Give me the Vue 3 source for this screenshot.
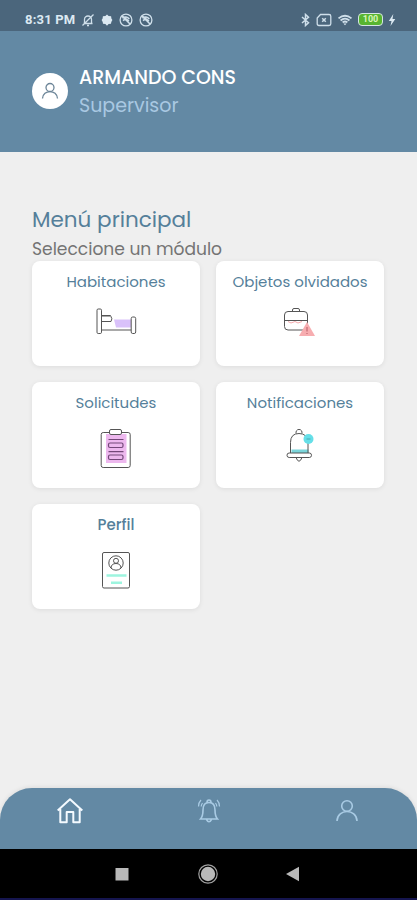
<template>
  <div class="screen">

    <!-- android status bar -->
    <div class="status-bar">
      <span class="clock">8:31 PM</span>
      <div class="status-left">
        <svg width="14" height="14" viewBox="0 0 14 14" class="line">
          <path d="M2.500 10.500h9M3.500 10V6.500a3.500 3.500 0 0 1 7 0V10M6 12.500h2M1.500 12.500l11-11" />
        </svg>
        <svg width="12" height="14" viewBox="0 0 12 14" class="solid">
          <path d="M6 1.500l1.600 1.600 2.500.2.300 2.300 1 1.500-1.100 1.900-.3 1.800-2.400.3L6 12.700l-1.600-1.600L2 10.800 1.700 9 .6 7.100l1-1.500.3-2.300 2.500-.2z" />
        </svg>
        <svg v-for="n in 2" :key="n" width="14" height="14" viewBox="0 0 14 14" class="line">
          <circle cx="7" cy="7" r="5.900" />
          <path d="M3.500 5.200c2-1.800 5-1.500 6.800.8M4 7.600c1.500-1.400 3.500-1.200 5 .4M3 3l8 8M6 5l4 3" stroke-width="1.500" />
        </svg>
      </div>
      <div class="status-right">
        <svg width="11" height="14" viewBox="0 0 11 14" class="line">
          <path d="M2 4l6.500 5.700L5.500 12.500v-11L8.500 4.300 2 10" stroke-width="1.500" />
        </svg>
        <svg width="16" height="14" viewBox="0 0 16 14" class="line">
          <path d="M4.500 1.500H13q1.800 0 1.800 1.800v7.400q0 1.800-1.800 1.800H3q-1.800 0-1.800-1.800V5z" />
          <path d="M6.200 5.200l3.600 3.600M9.800 5.200L6.200 8.800" stroke-width="1.500" />
        </svg>
        <svg width="16" height="14" viewBox="0 0 18 14" class="line">
          <path d="M1.700 5.200q7.300-6 14.600 0M4 7.500q5-4 10 0M6.300 9.700q2.700-2 5.400 0" stroke-width="2" />
          <path d="M7.200 10.800h3.600L9 13z" fill="#dce9f2" stroke="none" />
        </svg>
        <div class="battery">100</div>
        <svg width="8" height="14" viewBox="0 0 8 14" class="solid">
          <path d="M5.300 1L.8 8h2.700l-1 5L7.300 6H4.500z" />
        </svg>
      </div>
    </div>

    <!-- user header -->
    <header class="header">
      <div class="avatar">
        <svg width="18" height="18" viewBox="0 0 18 18">
          <circle cx="9" cy="5.500" r="4" />
          <path d="M1.500 16.500c.4-9.300 14.600-9.300 15 0" />
        </svg>
      </div>
      <div>
        <div class="user-name">ARMANDO CONS</div>
        <div class="user-role">Supervisor</div>
      </div>
    </header>

    <!-- module menu -->
    <main class="content">
      <h1>Menú principal</h1>
      <p>Seleccione un módulo</p>
      <div class="modules">
        <div v-for="m in modules" :key="m.id" class="card" :class="m.id">
          <div class="card-title">{{ m.name }}</div>

          <svg v-if="m.id === 'rooms'" width="44" height="44" viewBox="0 0 44 44" class="icon">
            <path d="M20 19.500h17v8H22z" class="lilac" />
            <rect x="3" y="9" width="4.500" height="24.500" rx="1.200" />
            <rect x="37.200" y="17" width="4.500" height="16.500" rx="1.500" />
            <path d="M7.500 30h29.700M7.500 21.500H17q2-2.500-.5-6h-9M7.500 16H16" />
          </svg>

          <svg v-else-if="m.id === 'lost'" width="44" height="44" viewBox="0 0 44 44" class="icon">
            <path d="M10 21.500l3 1.500 4-1.500 3 1.500 4-1.500" stroke="#f5a9ac" />
            <rect x="6.500" y="11.500" width="23" height="18.500" rx="3.500" />
            <path d="M14.500 11.500V10q0-1.500 1.500-1.500h4q1.500 0 1.500 1.500v1.500M7 20.500h22" />
            <path d="M29 22l8 14H21z" class="red" />
            <path d="M29 27v4.500M29 33v1" stroke="#b85b64" />
          </svg>

          <svg v-else-if="m.id === 'requests'" width="44" height="44" viewBox="0 0 44 44" class="icon">
            <path d="M12 7h20.500v29H12z" class="pink" />
            <rect x="7.200" y="5.500" width="29" height="35" rx="2" />
            <rect x="15.500" y="2.500" width="12" height="5" rx="1.500" fill="#fff" />
            <g stroke="#744879" stroke-width="1.200">
              <path d="M14.500 12.500h15M14.500 24.700h15" />
              <rect x="14.500" y="16" width="14.500" height="4.500" rx="1.500" />
              <rect x="14.500" y="28" width="14.500" height="4.500" rx="1.500" />
            </g>
          </svg>

          <svg v-else-if="m.id === 'alerts'" width="44" height="44" viewBox="0 0 44 44" class="icon">
            <path d="M13.500 22.500h17v3.500h-17z" class="teal" />
            <path d="M12.500 26V15.500q0-9 8.500-9t9 9V26M18.200 6.500a3 3 0 1 1 5.600 0M18 30.500q3 7.500 6 0" />
            <rect x="9" y="26" width="24.500" height="4.500" rx="2.200" />
            <circle cx="30.500" cy="12" r="5" class="cyan" />
            <path d="M28.500 12h4" stroke="#48a8b2" />
          </svg>

          <svg v-else width="44" height="44" viewBox="0 0 44 44" class="icon">
            <rect x="8.500" y="3.500" width="27" height="35.500" rx="1.500" />
            <circle cx="22" cy="14" r="7.200" />
            <circle cx="22" cy="11.800" r="2.500" />
            <path d="M17 19q.3-4.500 5-4.500t5 4.500" />
            <path d="M12.500 26.500h20M17 33.700h11" class="mint" />
          </svg>
        </div>
      </div>
    </main>

    <!-- bottom tabs -->
    <nav class="tabs">
      <svg width="28" height="28" viewBox="0 0 28 28" class="active">
        <path d="M1.700 13.500L14 2.200l12.300 11.300M4.300 12v13.200h6.400V15h6.600v10.200h6.400V12" />
      </svg>
      <svg width="28" height="28" viewBox="0 0 28 28">
        <path d="M5.500 22q2.500-3 2.500-9 0-7.500 6-7.500t6 7.500q0 6 2.500 9zM12 5.500q0-2.500 2-2.500t2 2.500M11.500 22.500q2.500 4.500 5 0" />
        <path d="M6 3Q3.500 5.500 3.500 9.500M22 3q2.500 2.500 2.500 6.500M7.500 6Q6.300 7.500 6.200 9.500M20.500 6q1.200 1.500 1.300 3.500" stroke-width="1.200" />
      </svg>
      <svg width="28" height="28" viewBox="0 0 28 28">
        <circle cx="14" cy="9" r="5.300" />
        <path d="M4 24c.5-12.600 19.500-12.600 20 0" />
      </svg>
    </nav>

    <!-- android system buttons -->
    <div class="system-bar">
      <svg width="22" height="22" viewBox="0 0 22 22">
        <path d="M4.500 5h13v12.500h-13z" />
      </svg>
      <svg width="22" height="22" viewBox="0 0 22 22">
        <circle cx="11" cy="11" r="7.200" />
        <circle cx="11" cy="11" r="9.200" class="ring" />
      </svg>
      <svg width="22" height="22" viewBox="0 0 22 22">
        <path d="M4 11l13-7.300v14.600z" />
      </svg>
    </div>

  </div>
</template>

<script setup>
//modules available to the supervisor
const modules = [
  { id: 'rooms', name: 'Habitaciones' },
  { id: 'lost', name: 'Objetos olvidados' },
  { id: 'requests', name: 'Solicitudes' },
  { id: 'alerts', name: 'Notificaciones' },
  { id: 'profile', name: 'Perfil' }
];
</script>

<style>
body { margin: 0; background: #efefef; }
</style>

<style scoped>
.screen {
  display: flex;
  flex-direction: column;
  box-sizing: border-box;
  width: 417px;
  height: 900px;
  overflow: hidden;
  background: #efefef;
  font-family: Poppins, Inter, "Open Sans", sans-serif;
  font-feature-settings: "cv11";
  border-bottom: 2px solid #15154f;
}

svg { display: block; flex: none; fill: none; }

.status-bar {
  display: flex;
  align-items: center;
  box-sizing: border-box;
  height: 31px;
  padding: 8px 21px 0 25px;
  background: #4b667c;
  color: #dce9f2;
}

.clock {
  width: 56px;
  font-family: Roboto, sans-serif;
  font-size: 13px;
  font-weight: 700;
  letter-spacing: 0.2px;
  white-space: nowrap;
}

.status-left { display: flex; gap: 6px; }
.status-right { display: flex; align-items: center; gap: 5px; margin-left: auto; }
.line { stroke: #cfdfea; stroke-width: 1.3; }
.solid { fill: #dce9f2; }

.battery {
  box-sizing: border-box;
  width: 25px;
  height: 13px;
  border: 1.5px solid #d5e5e3;
  border-radius: 4px;
  background: #58b530;
  color: #d9f5b8;
  font: 700 9px/11px Roboto, sans-serif;
  text-align: center;
}

.header {
  display: flex;
  box-sizing: border-box;
  height: 121px;
  padding: 35px 32px 0;
  gap: 11px;
  background: #6389a4;
}

.avatar {
  display: flex;
  align-items: center;
  justify-content: center;
  width: 36px;
  height: 36px;
  margin-top: 7px;
  border-radius: 50%;
  background: #fff;
}

.avatar svg { stroke: #6c8598; stroke-width: 1.3; }

.user-name {
  color: #fff;
  font-size: 19px;
  font-weight: 500;
  line-height: 24px;
  white-space: nowrap;
}

.user-role {
  margin-top: 4px;
  color: #a9c8e2;
  font-size: 19px;
  line-height: 24px;
}

.content {
  flex: 1;
  padding: 53px 32px 0;
}

h1 {
  margin: 0;
  color: #557f9a;
  font-size: 21.5px;
  font-weight: 400;
  line-height: 30px;
}

p {
  margin: 3px 0 0;
  color: #747474;
  font-size: 17.1px;
  line-height: 22px;
}

.modules {
  display: grid;
  grid-template-columns: 168px 168px;
  grid-auto-rows: 105.3px;
  gap: 16px;
  margin-top: 1px;
}

.card {
  display: flex;
  flex-direction: column;
  align-items: center;
  padding-top: 11px;
  border-radius: 8px;
  background: #fff;
  box-shadow: 0 1px 5px rgba(0, 0, 0, 0.08);
  box-sizing: border-box;
}

.card-title {
  margin-bottom: 8px;
  color: #557f9a;
  font-size: 15px;
  line-height: 20px;
  white-space: nowrap;
}

.profile .card-title { font-weight: 500; }
.requests .icon, .alerts .icon, .profile .icon { margin-top: 6px; }

.icon { stroke: #555; stroke-width: 1; }
.lilac { fill: #d9c1fa; stroke: none; }
.red { fill: #f7adb0; stroke: none; }
.pink { fill: #edb8ee; stroke: none; }
.teal { fill: #7bd5da; stroke: none; }
.cyan { fill: #65dfe8; stroke: none; }
.mint { stroke: #9df5df; stroke-width: 2.5; }

.tabs {
  display: flex;
  justify-content: space-between;
  box-sizing: border-box;
  height: 61px;
  padding: 9px 56px 0;
  border-radius: 32px 32px 0 0;
  background: #6389a4;
  box-shadow: 0 -1px 4px rgba(0, 0, 0, 0.08);
}

.tabs svg { stroke: #a9cbe4; stroke-width: 1.6; }
.tabs .active { stroke: #f4faff; stroke-width: 2; stroke-linejoin: round; }

.system-bar {
  display: flex;
  align-items: center;
  justify-content: center;
  gap: 63.5px;
  box-sizing: border-box;
  height: 49px;
  padding: 1px 2px 0 0;
  background: #000;
}

.system-bar svg { fill: #b9b9b9; }
.system-bar .ring { fill: none; stroke: #a0a0a0; stroke-width: 1.2; }
</style>
